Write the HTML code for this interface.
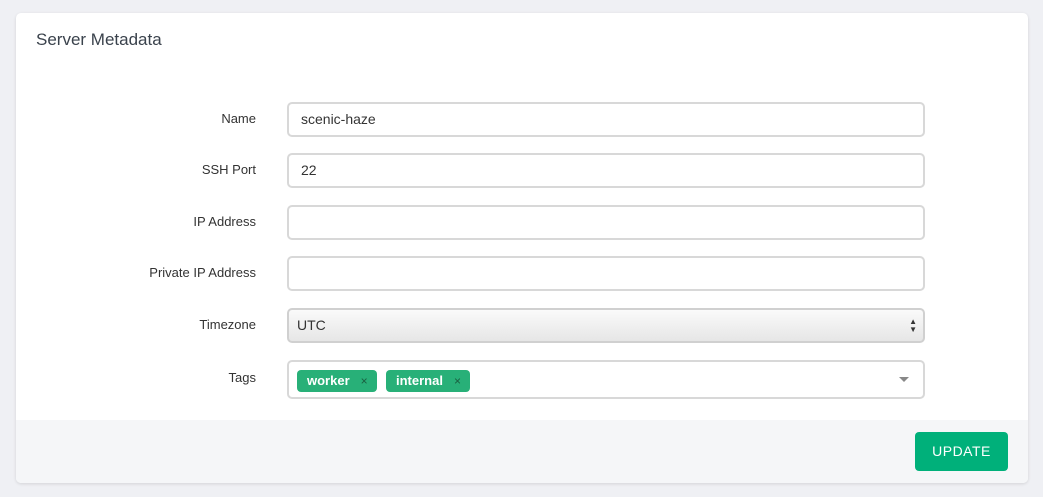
<!DOCTYPE html><html><head><style>
body{margin:0;background:#eff0f4;font-family:"Liberation Sans",sans-serif;color:#3d4650;width:1043px;height:497px;overflow:hidden;position:relative}
.card{position:absolute;left:16px;top:13px;width:1012px;height:470px;background:#fff;border-radius:5px;box-shadow:0 1px 3px rgba(0,0,0,.12);overflow:hidden}
.title{position:absolute;left:20px;top:17px;font-size:17px;color:#3a424c}
.lbl{position:absolute;right:772px;font-size:13px;color:#333;text-align:right}
.in{position:absolute;left:271px;height:31px;border:2px solid #d8d8d8;border-radius:5px;background:#fff;font-size:14px;line-height:31px;padding-left:12px;box-sizing:content-box;width:622px;color:#333}
.sel{background:linear-gradient(#fafafa,#e6e6e6);border-color:#d0d0d0;padding-left:8px;width:626px}
.tag{position:absolute;top:8px;height:22px;line-height:22px;background:#28b078;color:#fff;border-radius:4px;font-size:13px;font-weight:bold;padding:0 9px 0 10px}
.tag span{color:#1a5e40;font-weight:normal;font-size:12px;margin-left:11px}
.foot{position:absolute;left:0;top:407px;width:100%;height:63px;background:#f5f6f8}
.btn{position:absolute;left:899px;top:419px;width:93px;height:39px;background:#00b07a;color:#fff;border-radius:4px;font-size:14px;text-align:center;line-height:39px;letter-spacing:.5px}
</style></head><body><div class="card">
<div class="title">Server Metadata</div>
<div class="lbl" style="top:98px">Name</div><div class="in" style="top:89px">scenic-haze</div>
<div class="lbl" style="top:149px">SSH Port</div><div class="in" style="top:140px">22</div>
<div class="lbl" style="top:201px">IP Address</div><div class="in" style="top:192px"></div>
<div class="lbl" style="top:252px">Private IP Address</div><div class="in" style="top:243px"></div>
<div class="lbl" style="top:304px">Timezone</div><div class="in sel" style="top:295px">UTC<span style="position:absolute;right:6px;top:0;font-size:8px;line-height:8px;padding-top:8px;color:#333">▲<br>▼</span></div>
<div class="lbl" style="top:357px">Tags</div><div class="in" style="top:347px;height:35px;padding-left:0;width:634px">
<div class="tag" style="left:8px">worker<span>×</span></div>
<div class="tag" style="left:97px">internal<span>×</span></div>
<div style="position:absolute;right:14px;top:15px;width:0;height:0;border-left:5px solid transparent;border-right:5px solid transparent;border-top:5px solid #888"></div>
</div>
<div class="foot"></div>
<div class="btn">UPDATE</div>
</div></body></html>
